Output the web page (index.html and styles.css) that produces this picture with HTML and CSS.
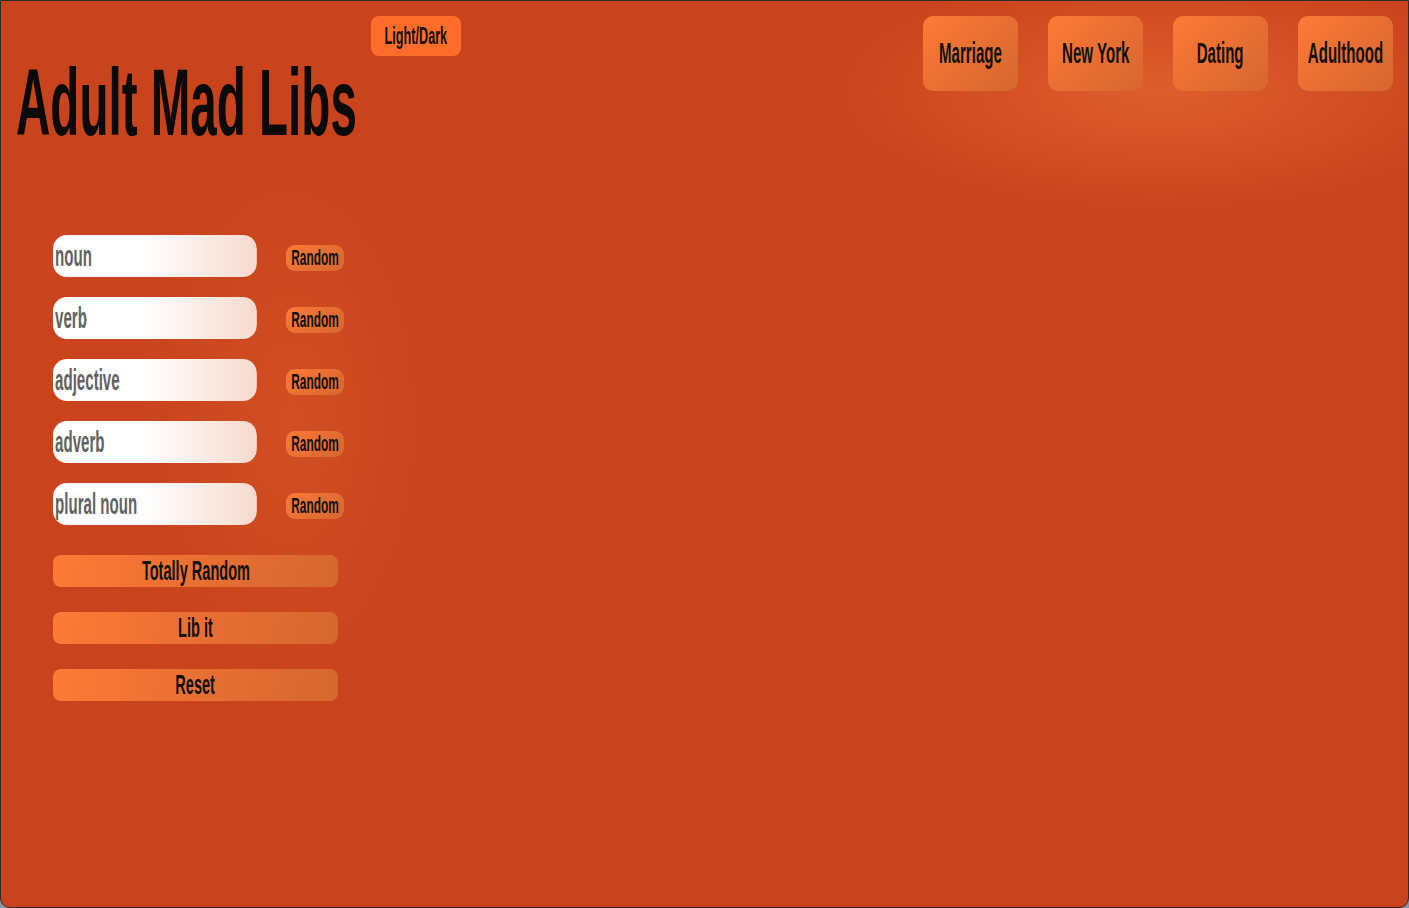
FILE: index.html
```html
<!DOCTYPE html>
<html lang="en">
<head>
<meta charset="utf-8">
<title>Adult Mad Libs</title>
<link rel="stylesheet" href="styles.css">
</head>
<body>
<div class="app">
  <header class="top">
    <h1 class="title"><span class="sx sx-left">Adult Mad Libs</span></h1>
    <button class="mode"><span class="sx">Light/Dark</span></button>
    <nav class="cats">
      <button class="cat"><span class="sx">Marriage</span></button>
      <button class="cat"><span class="sx">New York</span></button>
      <button class="cat"><span class="sx">Dating</span></button>
      <button class="cat"><span class="sx">Adulthood</span></button>
    </nav>
  </header>
  <main class="form">
    <div class="fields">
      <div class="field"><input class="word" type="text" placeholder="noun"></div>
      <button class="rand"><span class="sx">Random</span></button>
      <div class="field"><input class="word" type="text" placeholder="verb"></div>
      <button class="rand"><span class="sx">Random</span></button>
      <div class="field"><input class="word" type="text" placeholder="adjective"></div>
      <button class="rand"><span class="sx">Random</span></button>
      <div class="field"><input class="word" type="text" placeholder="adverb"></div>
      <button class="rand"><span class="sx">Random</span></button>
      <div class="field"><input class="word" type="text" placeholder="plural noun"></div>
      <button class="rand"><span class="sx">Random</span></button>
    </div>
    <div class="actions">
      <button class="act"><span class="sx">Totally Random</span></button>
      <button class="act"><span class="sx">Lib it</span></button>
      <button class="act"><span class="sx">Reset</span></button>
    </div>
  </main>
</div>
</body>
</html>
```

FILE: styles.css
```css
:root {
  --s: 0.52;
}

* {
  box-sizing: border-box;
}

html, body {
  margin: 0;
  padding: 0;
}

body {
  background: #8d9099;
  font-family: "Liberation Sans", Arial, sans-serif;
  font-weight: 700;
}

.app {
  width: 1409px;
  height: 908px;
  border: 1px solid #2c2c2c;
  border-radius: 0 0 10px 10px;
  overflow: hidden;
  background:
    radial-gradient(ellipse 340px 125px at 1160px 90px, rgba(234, 108, 54, 0.65), rgba(234, 108, 54, 0) 100%),
    radial-gradient(ellipse 150px 280px at 290px 420px, rgba(226, 100, 50, 0.35), rgba(226, 100, 50, 0) 100%),
    #c9431c;
}

.sx {
  display: inline-block;
  white-space: nowrap;
  transform: scaleX(var(--s));
  transform-origin: center;
}

.sx-left {
  transform-origin: left center;
}

.top {
  display: flex;
  align-items: flex-start;
  padding: 15px 15px 0 15px;
}

.title {
  margin: 40px 0 0 0;
  width: 355px;
  height: 94px;
  font-size: 94px;
  line-height: 94px;
  font-weight: 700;
  color: #0a0a0a;
  white-space: nowrap;
  --s: 0.506;
}

button {
  font-family: inherit;
  font-weight: 700;
  border: none;
  padding: 0;
  margin: 0;
  color: #111;
  display: flex;
  align-items: center;
  justify-content: center;
  overflow: visible;
  cursor: pointer;
}

.mode {
  width: 90px;
  height: 40px;
  border-radius: 8px;
  background: #fe6c2b;
  font-size: 23px;
  --s: 0.55;
}

.cats {
  margin-left: auto;
  display: flex;
  gap: 30px;
}

.cat {
  width: 95px;
  height: 75px;
  border-radius: 10px;
  background: linear-gradient(135deg, #fe7a36 0%, #e96f33 50%, #d5672f 100%);
  font-size: 29px;
}

.form {
  margin-top: 85px;
  padding-left: 52px;
}

.fields {
  display: grid;
  grid-template-columns: 204px 58px;
  column-gap: 29px;
  row-gap: 20px;
  align-items: center;
}

.field {
  width: 204px;
  height: 42px;
}

.word {
  width: 392px;
  height: 42px;
  border: none;
  outline: none;
  margin: 0;
  padding: 0 0 0 4px;
  border-radius: 27px / 14px;
  background: linear-gradient(to right, #ffffff 0%, #ffffff 45%, #f6dace 100%);
  font-family: inherit;
  font-weight: 700;
  font-size: 29px;
  color: #333;
  transform: scaleX(var(--s));
  transform-origin: left center;
}

.word::placeholder {
  color: #626262;
  opacity: 1;
}

.rand {
  width: 58px;
  height: 26px;
  margin-top: 4px;
  border-radius: 9px;
  background: linear-gradient(135deg, #fe7a36 0%, #e96f33 50%, #d5672f 100%);
  font-size: 22px;
  --s: 0.54;
}

.actions {
  margin-top: 30px;
  display: flex;
  flex-direction: column;
  gap: 25px;
  width: 285px;
}

.act {
  width: 285px;
  height: 32px;
  border-radius: 8px;
  background: linear-gradient(100deg, #fe7a36 0%, #e96f33 50%, #d5672f 100%);
  font-size: 28px;
}
```
